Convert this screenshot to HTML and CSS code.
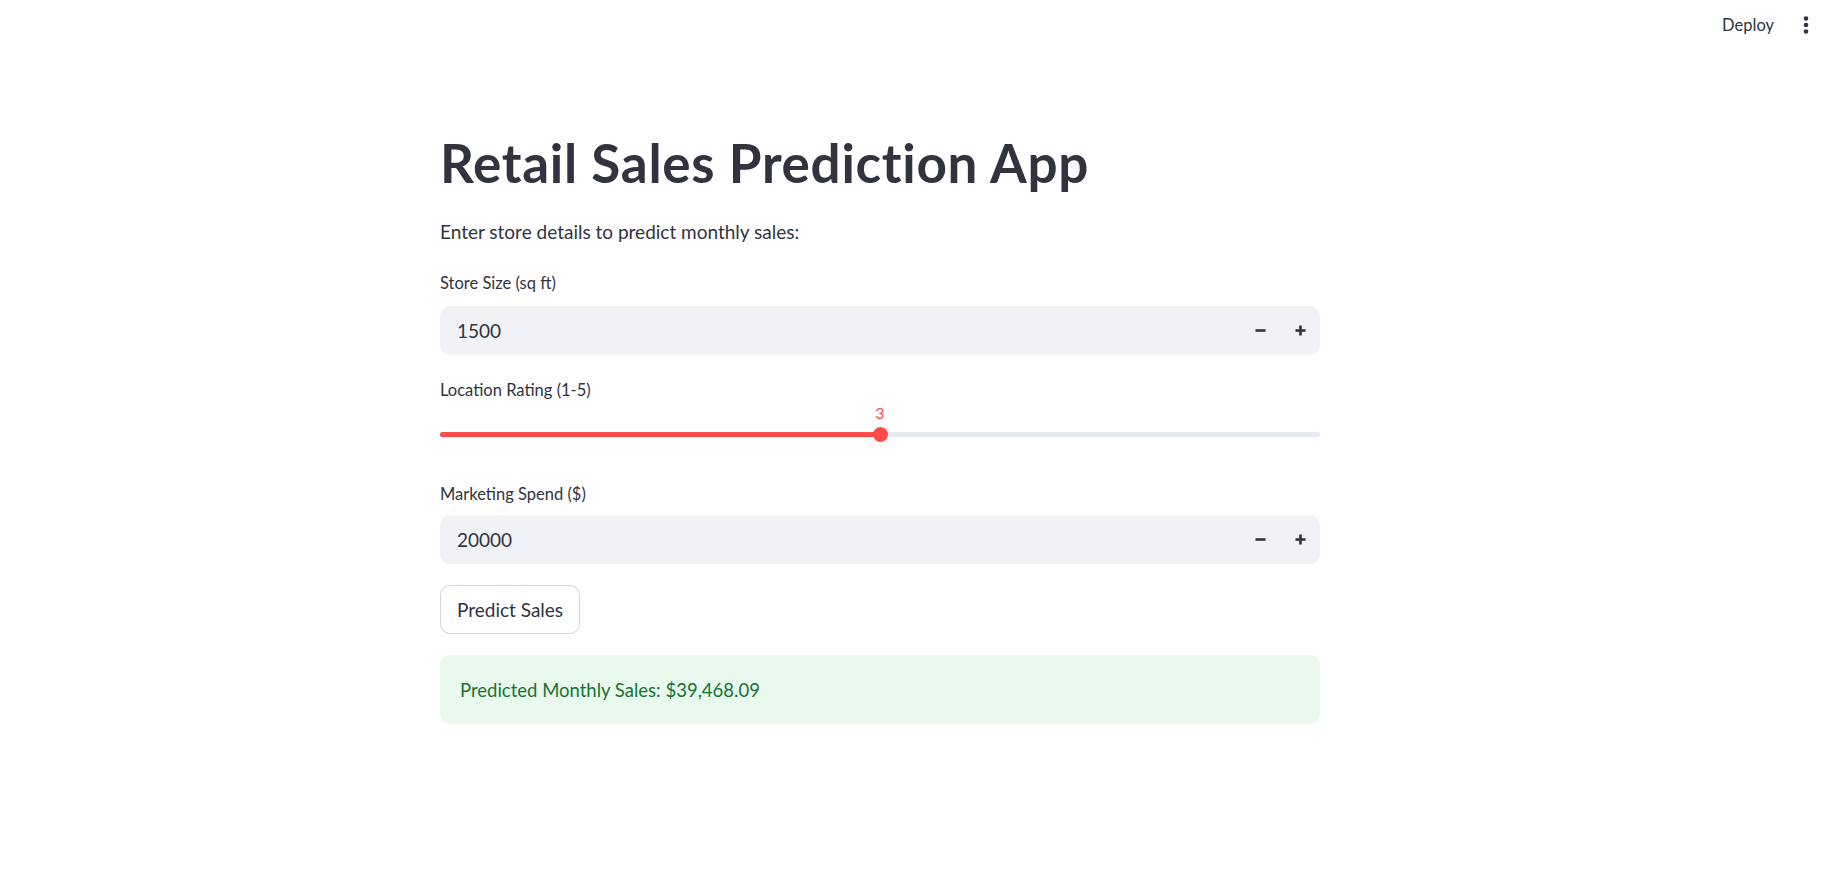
FILE: index.html
```html
<!DOCTYPE html>
<html lang="en">
<head>
<meta charset="utf-8">
<title>Retail Sales Prediction App</title>
<link rel="stylesheet" href="styles.css">
</head>
<body>
<header class="topbar">
  <button class="deploy">Deploy</button>
  <button class="menu" aria-label="Main menu">
    <svg width="6" height="20" viewBox="0 0 6 20"><circle cx="3" cy="3.5" r="2.3"/><circle cx="3" cy="10" r="2.3"/><circle cx="3" cy="16.5" r="2.3"/></svg>
  </button>
</header>
<div class="page">
<main class="main">
  <h1 class="title">Retail Sales Prediction App</h1>
  <p class="intro">Enter store details to predict monthly sales:</p>

  <div class="widget">
    <label class="wlabel">Store Size (sq ft)</label>
    <div class="numinput">
      <span class="numval">1500</span>
      <button class="step" aria-label="minus"><svg width="11" height="11" viewBox="0 0 11 11"><rect x="0.5" y="4.2" width="10" height="2.6"/></svg></button>
      <button class="step" aria-label="plus"><svg width="11" height="11" viewBox="0 0 11 11"><rect x="0.5" y="4.2" width="10" height="2.6"/><rect x="4.2" y="0.5" width="2.6" height="10"/></svg></button>
    </div>
  </div>

  <div class="widget">
    <label class="wlabel">Location Rating (1-5)</label>
    <div class="slider">
      <div class="track"><div class="fill" style="width:50%"></div></div>
      <div class="thumb" style="left:50%"><span class="thumbval">3</span></div>
    </div>
  </div>

  <div class="widget">
    <label class="wlabel wlabel-tight">Marketing Spend ($)</label>
    <div class="numinput">
      <span class="numval">20000</span>
      <button class="step" aria-label="minus"><svg width="11" height="11" viewBox="0 0 11 11"><rect x="0.5" y="4.2" width="10" height="2.6"/></svg></button>
      <button class="step" aria-label="plus"><svg width="11" height="11" viewBox="0 0 11 11"><rect x="0.5" y="4.2" width="10" height="2.6"/><rect x="4.2" y="0.5" width="2.6" height="10"/></svg></button>
    </div>
  </div>

  <div class="btnrow">
    <button class="predict">Predict Sales</button>
  </div>

  <div class="success">Predicted Monthly Sales: $39,468.09</div>
</main>
</div>
</body>
</html>
```
FILE: styles.css
```css
* { box-sizing: border-box; }

html, body {
  margin: 0;
  padding: 0;
  background: #ffffff;
  color: #31333f;
  font-family: Lato, "Noto Sans", sans-serif;
}

button {
  font-family: inherit;
  color: inherit;
  background: none;
  border: none;
  padding: 0;
  cursor: pointer;
}

.topbar {
  height: 50px;
  display: flex;
  justify-content: flex-end;
  align-items: center;
  padding-right: 12px;
  gap: 20px;
}

.deploy {
  font-size: 16.5px;
  line-height: 20px;
  color: #31333f;
}

.menu {
  width: 24px;
  height: 24px;
  display: flex;
  align-items: center;
  justify-content: center;
}
.menu svg { fill: #31333f; }

.page {
  padding-right: 70px;
}

.main {
  width: 880px;
  margin: 0 auto;
  padding-top: 80px;
  display: flex;
  flex-direction: column;
}

.title {
  margin: 0;
  font-size: 53px;
  line-height: 66px;
  font-weight: 700;
  letter-spacing: 0.7px;
  color: #31333f;
}

.intro {
  margin: 20px 0 0;
  font-size: 19px;
  line-height: 32px;
}

.widget {
  margin-top: 20px;
  display: flex;
  flex-direction: column;
}

.wlabel {
  font-size: 16.5px;
  line-height: 30px;
  margin-bottom: 8px;
}

.wlabel-tight {
  margin-top: 2px;
  margin-bottom: 6px;
}

.numinput {
  height: 49px;
  background: #f0f2f6;
  border-radius: 10px;
  display: flex;
  align-items: center;
  padding-left: 17px;
}

.numval {
  flex: 1;
  font-size: 19px;
}

.step {
  width: 40px;
  height: 49px;
  display: flex;
  align-items: center;
  justify-content: center;
}
.step svg { fill: #31333f; }

.slider {
  position: relative;
  height: 52px;
  margin-top: -8px;
}

.track {
  position: absolute;
  left: 0;
  right: 0;
  top: 27px;
  height: 5px;
  border-radius: 3px;
  background: #e6e9ef;
}

.fill {
  height: 100%;
  background: #ff4b4b;
  border-radius: 3px;
}

.thumb {
  position: absolute;
  top: 22px;
  width: 15px;
  height: 15px;
  margin-left: -7.5px;
  border-radius: 50%;
  background: #ff4b4b;
}

.thumbval {
  position: absolute;
  left: 50%;
  bottom: 19px;
  transform: translateX(-50%);
  font-size: 16px;
  line-height: 20px;
  color: #ff4b4b;
}

.btnrow {
  margin-top: 21px;
  display: flex;
}

.predict {
  height: 49px;
  padding: 0 16px;
  border: 1px solid rgba(49, 51, 63, 0.2);
  border-radius: 10px;
  background: #ffffff;
  font-size: 19px;
  color: #31333f;
}

.success {
  margin-top: 21px;
  height: 69px;
  border-radius: 10px;
  background: #e9f9ee;
  color: #177233;
  font-size: 18.5px;
  display: flex;
  align-items: center;
  padding-left: 20px;
}
```
